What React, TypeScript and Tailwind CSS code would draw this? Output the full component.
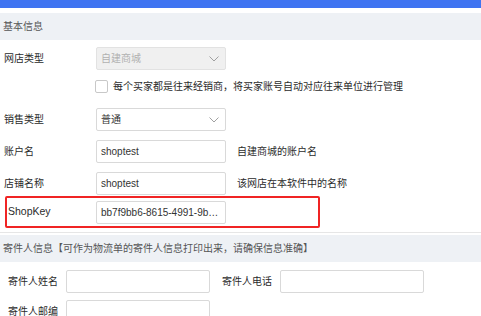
import React from "react";

const font = { fontFamily: '"Liberation Sans", "Noto Sans CJK SC", sans-serif' };

function Chevron() {
  return (
    <svg width="10" height="6" viewBox="0 0 10 6" className="absolute right-[6px] top-1/2 -translate-y-1/2">
      <path d="M0.5 0.5 L5 5 L9.5 0.5" fill="none" stroke="#a0a0a0" strokeWidth="1" />
    </svg>
  );
}

function Select({ value, disabled }: { value: string; disabled?: boolean }) {
  return (
    <div
      className={
        "relative w-[130px] h-[23px] rounded-[2px] border flex items-center px-[4px] " +
        (disabled ? "bg-[#f0f0f0] border-[#e2e2e2] text-[#b0b0b0]" : "bg-white border-[#d9d9d9] text-[#333]")
      }
    >
      {value}
      <Chevron />
    </div>
  );
}

function Input({ value, w = "w-[130px]" }: { value?: string; w?: string }) {
  return (
    <div className={w + " h-[23px] rounded-[2px] border border-[#d9d9d9] bg-white flex items-center px-[4px] text-[#333] whitespace-nowrap"}>
      {value}
    </div>
  );
}

export default function App() {
  return (
    <div className="w-[481px] h-[316px] overflow-hidden bg-white text-[10px] text-[#2b2b2b]" style={font}>
      <div className="h-[8px] bg-[#3f74f1]" />
      <div className="mt-[5px] h-[27px] bg-[#eef1f5] flex items-center pl-[3px] text-[#555]">基本信息</div>

      <div className="mt-[7px] flex items-center h-[23px]">
        <div className="w-[96px] pl-[4px]">网店类型</div>
        <Select value="自建商城" disabled />
      </div>

      <div className="mt-[10px] flex items-center h-[13px] pl-[95px]">
        <div className="w-[13px] h-[13px] rounded-[2px] border border-[#c8c8c8] bg-white" />
        <span className="ml-[5px]">每个买家都是往来经销商，将买家账号自动对应往来单位进行管理</span>
      </div>

      <div className="mt-[15px] flex items-center h-[23px]">
        <div className="w-[96px] pl-[4px]">销售类型</div>
        <Select value="普通" />
      </div>

      <div className="mt-[9px] flex items-center h-[23px]">
        <div className="w-[96px] pl-[4px]">账户名</div>
        <Input value="shoptest" />
        <span className="ml-[11px]">自建商城的账户名</span>
      </div>

      <div className="mt-[9px] flex items-center h-[23px]">
        <div className="w-[96px] pl-[4px]">店铺名称</div>
        <Input value="shoptest" />
        <span className="ml-[11px]">该网店在本软件中的名称</span>
      </div>

      <div className="mt-[1px] ml-[5px] w-[315px] h-[32px] border-2 border-[#f02424] rounded-[2px] flex items-center">
        <div className="w-[89px] pl-[1px] text-[10.5px]">ShopKey</div>
        <Input value="bb7f9bb6-8615-4991-9b…" />
      </div>

      <div className="mt-[4px] border-t border-[#e6e6e6]" />
      <div className="mt-[2px] h-[27px] bg-[#eef1f5] flex items-center pl-[3px] text-[#555]">
        寄件人信息【可作为物流单的寄件人信息打印出来，请确保信息准确】
      </div>

      <div className="mt-[8px] flex items-center h-[23px]">
        <div className="w-[66px] pl-[8px]">寄件人姓名</div>
        <Input w="w-[144px]" />
        <div className="w-[70px] pl-[12px]">寄件人电话</div>
        <Input w="w-[144px]" />
      </div>

      <div className="mt-[7px] flex items-center h-[23px]">
        <div className="w-[66px] pl-[8px]">寄件人邮编</div>
        <Input w="w-[144px]" />
      </div>
    </div>
  );
}
